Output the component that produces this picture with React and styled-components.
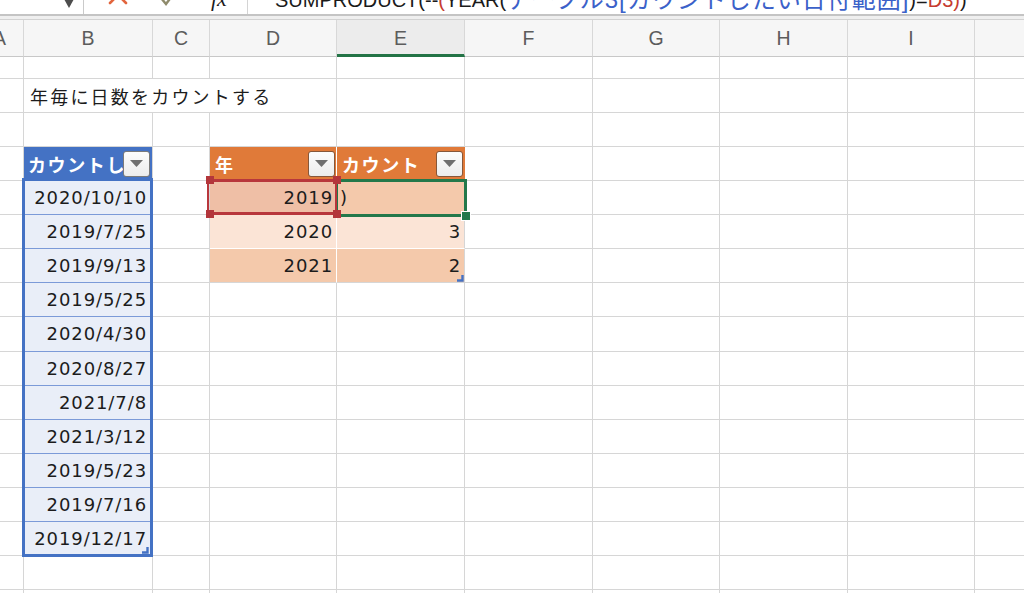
import React from "react";
import styled, { createGlobalStyle } from "styled-components";

const GRID = "#d6d6d6";
const BLUE = "#4472c4";
const ORANGE = "#e07a39";
const BAND_DARK = "#f4c9ab";
const BAND_LIGHT = "#fbe4d6";

const GlobalStyle = createGlobalStyle`
  *, *::before, *::after { box-sizing: border-box; }
  html, body { margin: 0; padding: 0; background: #fff; }
  body { font-family: "DejaVu Sans", "Noto Sans CJK JP", sans-serif; }
`;

const Window = styled.div`
  width: 1024px;
  height: 593px;
  overflow: hidden;
  display: flex;
  flex-direction: column;
  background: #fff;
`;

/* formula bar – scrolled up, only its lower edge shows */
const FormulaBar = styled.div`
  flex: 0 0 16px;
  display: flex;
  align-items: stretch;
  overflow: hidden;
  border-bottom: 2px solid #c4c4c4;
`;

const NameBox = styled.div`
  flex: 0 0 84px;
  display: flex;
  justify-content: flex-end;
  align-items: flex-end;
  padding: 0 9px 6px 0;
  border-right: 1px solid #cacaca;
`;

const BarButtons = styled.div`
  flex: 0 0 164px;
  display: flex;
  align-items: flex-end;
  border-right: 1px solid #d4d4d4;
`;

const BarIcon = styled.svg`
  flex: none;
  margin-left: ${p => p.$left}px;
  margin-bottom: ${p => p.$bottom}px;
`;

const Fx = styled.span`
  margin-left: 34px;
  margin-bottom: 4px;
  font: italic 22px/22px "Liberation Serif", serif;
  color: #1b1b1b;
`;

const FormulaText = styled.div`
  flex: 1;
  display: flex;
  align-items: flex-end;
  padding: 0 0 4px 27px;
  white-space: nowrap;
  font: 20px/20px "Liberation Sans", Arial, "Noto Sans CJK JP", sans-serif;
  color: #1a1a1a;
`;

const Token = styled.span`
  color: ${p => p.$color || "#1a1a1a"};
  ${p => p.$wide && "font-size: 24px; letter-spacing: 1px;"}
`;

const BarGap = styled.div`
  flex: 0 0 4px;
  background: #efefef;
  border-bottom: 1px solid #d2d2d2;
`;

const Sheet = styled.div`
  flex: none;
  display: grid;
  grid-template-columns: 48px 129px 57px 127px 128px 128px 127px 128px 127px 128px;
  grid-template-rows: 37px 22px repeat(16, 34.07px);
  margin-left: -24px;
`;

const ColHead = styled.div`
  grid-row: 1;
  grid-column: ${p => p.$col};
  display: flex;
  align-items: center;
  justify-content: center;
  padding-top: ${p => (p.$active ? 2 : 0)}px;
  background: ${p => (p.$active ? "#ececec" : "#f6f6f6")};
  border-right: 1px solid #d8d8d8;
  border-bottom: ${p => (p.$active ? "3px solid #237346" : "1px solid #c8c8c8")};
  font: 19.5px "Liberation Sans", Arial, sans-serif;
  color: #5c5c5c;
`;

const Cell = styled.div`
  grid-row: ${p => p.$row};
  grid-column: ${p => p.$col} / span ${p => p.$span || 1};
  display: flex;
  align-items: center;
  justify-content: ${p => (p.$right ? "flex-end" : "flex-start")};
  padding: ${p => p.$pad || "0 5px"};
  min-width: 0;
  overflow: hidden;
  white-space: nowrap;
  background: ${p => p.$bg || "#fff"};
  border-right: 1px solid ${p => p.$rb || GRID};
  border-bottom: 1px solid ${p => p.$bb || GRID};
  font-size: 18px;
  color: #1c1c1c;
`;

const Value = styled.span`
  font-family: "DejaVu Sans", sans-serif;
  letter-spacing: 0.9px;
`;

const Note = styled.span`
  font-family: "Noto Sans CJK JP", sans-serif;
  letter-spacing: 2.2px;
  color: #1c1c1c;
`;

const HeadLabel = styled.span`
  flex: 1 1 auto;
  min-width: 0;
  overflow: hidden;
  font-family: "Noto Sans CJK JP", sans-serif;
  font-weight: 700;
  letter-spacing: 1.6px;
  color: #fff;
`;

const FilterButton = styled.span`
  flex: none;
  width: 27px;
  height: 26px;
  display: flex;
  align-items: center;
  justify-content: center;
  background: linear-gradient(#fcfcfc, #ececec);
  border: 1px solid ${p => (p.$tone === "orange" ? "#86573a" : "#7a7a7a")};
  border-radius: 3px;
`;

/* range / selection outlines sit on top of the cells */
const RangeFrame = styled.div`
  grid-column: 2;
  grid-row: 6 / 17;
  margin: -3px 0 -1px -2px;
  border: 3px solid ${BLUE};
  z-index: 2;
  pointer-events: none;
`;

const RefFrame = styled.div`
  grid-column: 4;
  grid-row: 6;
  margin: -2px 0 0 -3px;
  border-style: solid;
  border-color: #b8373c;
  border-width: 3px 2px;
  position: relative;
  z-index: 4;
  pointer-events: none;
`;

const RefHandle = styled.span`
  position: absolute;
  width: 8px;
  height: 8px;
  background: #b3363b;
  ${p => (p.$top ? "top: -6px;" : "bottom: -6px;")}
  ${p => (p.$left ? "left: -3px;" : "right: -6px;")}
`;

const ActiveFrame = styled.div`
  grid-column: 5;
  grid-row: 6;
  margin: -2px;
  border: 3px solid #23784a;
  position: relative;
  z-index: 3;
  pointer-events: none;
`;

const FillHandle = styled.span`
  position: absolute;
  right: -7px;
  bottom: -7px;
  width: 10px;
  height: 10px;
  background: #23784a;
  border: 1px solid #fff;
`;

const TableCorner = styled.svg`
  grid-column: ${p => p.$col};
  grid-row: ${p => p.$row};
  justify-self: end;
  align-self: end;
  margin: 0 ${p => p.$mr}px ${p => p.$mb}px 0;
  z-index: 5;
`;

const dates = [
  "2020/10/10",
  "2019/7/25",
  "2019/9/13",
  "2019/5/25",
  "2020/4/30",
  "2020/8/27",
  "2021/7/8",
  "2021/3/12",
  "2019/5/23",
  "2019/7/16",
  "2019/12/17",
];

const yearCounts = [
  ["2019", ")"],
  ["2020", "3"],
  ["2021", "2"],
];

const letters = ["A", "B", "C", "D", "E", "F", "G", "H", "I", ""];

const Triangle = () => (
  <svg width="13" height="7" viewBox="0 0 13 7">
    <polygon points="0,0 13,0 6.5,7" fill="#6f6f6f" />
  </svg>
);

const Corner = ({ col, row, mr, mb }) => (
  <TableCorner $col={col} $row={row} $mr={mr} $mb={mb} width="7" height="7" viewBox="0 0 7 7">
    <path d="M5.5 0 V5.5 H0" fill="none" stroke={BLUE} strokeWidth="2.4" />
  </TableCorner>
);

function renderCell(r, c) {
  const row = r + 1;
  const key = `${r}-${c}`;
  const base = { key, $row: row, $col: c };

  if (r === 2 && (c === 3 || c === 4)) return null;
  if (r === 2 && c === 2) {
    return (
      <Cell {...base} $span={3} $pad="0 6px">
        <Note>年毎に日数をカウントする</Note>
      </Cell>
    );
  }

  // date list table
  if (c === 2 && r === 4) {
    return (
      <Cell {...base} $bg={BLUE} $pad="0 2px 0 4px">
        <HeadLabel>カウントしたい日付範囲</HeadLabel>
        <FilterButton>
          <Triangle />
        </FilterButton>
      </Cell>
    );
  }
  if (c === 2 && r >= 5 && r <= 15) {
    return (
      <Cell {...base} $bg="#e9eef8" $bb="#7b9ad8" $right $pad="0 5px 0 4px">
        <Value>{dates[r - 5]}</Value>
      </Cell>
    );
  }

  // year / count table
  if ((c === 4 || c === 5) && r === 4) {
    return (
      <Cell {...base} $bg={ORANGE} $rb={c === 4 ? "#fff" : ORANGE} $bb="#fff" $pad="0 1px 0 5px">
        <HeadLabel>{c === 4 ? "年" : "カウント"}</HeadLabel>
        <FilterButton $tone="orange">
          <Triangle />
        </FilterButton>
      </Cell>
    );
  }
  if ((c === 4 || c === 5) && r >= 5 && r <= 7) {
    const [year, count] = yearCounts[r - 5];
    const editing = r === 5 && c === 5;
    let bg = r === 6 ? BAND_LIGHT : BAND_DARK;
    if (r === 5 && c === 4) bg = "#efbfa6";
    return (
      <Cell
        {...base}
        $bg={bg}
        $rb={c === 4 ? "#fff" : GRID}
        $bb={r === 7 ? GRID : "#fff"}
        $right={!editing}
        $pad={editing ? "0 0 0 3px" : "0 3px 0 4px"}
      >
        <Value>{c === 4 ? year : count}</Value>
      </Cell>
    );
  }

  return <Cell {...base} />;
}

const App = () => {
  const cells = [];
  for (let r = 1; r <= 17; r++) {
    for (let c = 1; c <= letters.length; c++) {
      const cell = renderCell(r, c);
      if (cell) cells.push(cell);
    }
  }

  return (
    <Window>
      <GlobalStyle />
      <FormulaBar>
        <NameBox>
          <svg width="10" height="9" viewBox="0 0 10 9">
            <polygon points="0,0 10,0 5,9" fill="#4d4d4d" />
          </svg>
        </NameBox>
        <BarButtons>
          <BarIcon $left={24} $bottom={9} width="20" height="20" viewBox="0 0 20 20">
            <path d="M2 2 L18 18 M18 2 L2 18" stroke="#e2653d" strokeWidth="2.6" strokeLinecap="round" />
          </BarIcon>
          <BarIcon $left={31} $bottom={8} width="18" height="16" viewBox="0 0 18 16">
            <path d="M2 8 L7 14 L16 2" fill="none" stroke="#8f8b6c" strokeWidth="2.4" strokeLinecap="round" />
          </BarIcon>
          <Fx>fx</Fx>
        </BarButtons>
        <FormulaText>
          <Token>SUMPRODUCT(--</Token>
          <Token $color="#c63b2f">(</Token>
          <Token>YEAR(</Token>
          <Token $color="#3b61c9" $wide>
            テーブル3[カウントしたい日付範囲]
          </Token>
          <Token>)=</Token>
          <Token $color="#c63b2f">D3)</Token>
          <Token>)</Token>
        </FormulaText>
      </FormulaBar>
      <BarGap />
      <Sheet>
        {letters.map((l, i) => (
          <ColHead key={i} $col={i + 1} $active={l === "E"}>
            {l}
          </ColHead>
        ))}
        {cells}
        <RangeFrame />
        <RefFrame>
          <RefHandle $top $left />
          <RefHandle $top />
          <RefHandle $left />
          <RefHandle />
        </RefFrame>
        <ActiveFrame>
          <FillHandle />
        </ActiveFrame>
        <Corner col={2} row={16} mr={4} mb={2} />
        <Corner col={5} row={8} mr={1} mb={1} />
      </Sheet>
    </Window>
  );
};

export default App;
